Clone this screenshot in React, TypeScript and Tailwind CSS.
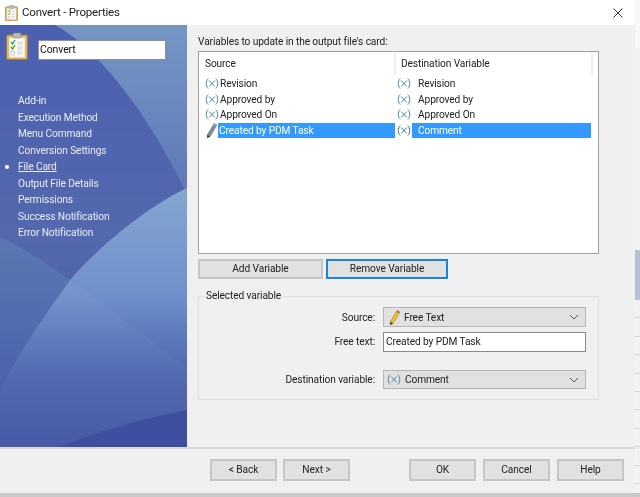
import React from "react";

const font = { fontFamily: '"Roboto", "Liberation Sans", sans-serif' };

function VarIcon({ light = false }: { light?: boolean }) {
  const c = light ? "#2f7aa6" : "#4d87a8";
  return (
    <svg width="14" height="11" viewBox="0 0 14 11" className="shrink-0">
      <path d="M3.200.5C.6 3 .6 8 3.200 10.500" fill="none" stroke={c} strokeWidth="1" />
      <path d="M10.800.5C13.400 3 13.400 8 10.800 10.500" fill="none" stroke={c} strokeWidth="1" />
      <path d="M4.200 2.500 9.800 8.500M9.800 2.500 4.200 8.500" fill="none" stroke={c} strokeWidth="1" />
    </svg>
  );
}

function Pencil({ gray = false }: { gray?: boolean }) {
  return (
    <svg width="12" height="17" viewBox="0 0 12 17" className="shrink-0">
      <path d="M8.200 1.500 10.800 3 4 14.500 1.300 15.800 1.400 12.800Z" fill={gray ? "#7b8f9e" : "#f2c230"} stroke={gray ? "#5b7182" : "#a57f16"} strokeWidth=".7" />
      <path d="M8.200 1.500 10.800 3 10 4.400 7.400 2.900Z" fill={gray ? "#95a5b0" : "#d76a4a"} />
      <path d="M1.400 12.800 4 14.500 1.300 15.800Z" fill="#333" />
    </svg>
  );
}

function Chevron() {
  return (
    <svg width="10" height="6" viewBox="0 0 10 6" className="shrink-0">
      <path d="M1 1 5 5 9 1" fill="none" stroke="#555" strokeWidth="1" />
    </svg>
  );
}

function Clipboard({ small = false }: { small?: boolean }) {
  const s = small ? "w-[13px] h-[16px]" : "w-[22px] h-[28px]";
  return (
    <svg viewBox="0 0 22 28" className={s + " shrink-0"}>
      <rect x=".5" y="3" width="21" height="24.500" rx="1.500" fill="#e0b566" stroke="#a97c2c" />
      <rect x="3" y="5.500" width="16" height="20" fill="#fbfbf6" stroke="#c9c4ae" strokeWidth=".5" />
      <rect x="7" y="1" width="8" height="5" rx="1" fill="#b7bcc0" stroke="#7c8185" strokeWidth=".6" />
      <path d="M5 10 6.500 12 9 8M5 15 6.500 17 9 13" fill="none" stroke="#3aa63a" strokeWidth="1.400" />
      <rect x="5" y="19.500" width="3.500" height="3.500" fill="#fff" stroke="#aaa" strokeWidth=".6" />
      <path d="M11 10h6M11 12h5M11 15h6M11 17h5M11 20h6M11 22h5" stroke="#c4c4c4" strokeWidth=".8" />
    </svg>
  );
}

function Btn({ label, w, focus = false }: { label: string; w: string; focus?: boolean }) {
  return (
    <div
      className={
        "flex items-center justify-center bg-[#e1e1e1] text-[10.2px] tracking-[-0.1px] text-[#222] border-2 " +
        (focus ? "border-[#1b84d8] " : "border-[#c6c6c6] ") +
        w
      }
    >
      {label}
    </div>
  );
}

const rows = [
  ["Revision", "Revision"],
  ["Approved by", "Approved by"],
  ["Approved On", "Approved On"],
];

const nav = [
  "Add-in",
  "Execution Method",
  "Menu Command",
  "Conversion Settings",
  "File Card",
  "Output File Details",
  "Permissions",
  "Success Notification",
  "Error Notification",
];

export default function App() {
  return (
    <div className="relative w-[640px] h-[497px] overflow-hidden bg-[#c9c9c9] flex flex-col blur-[0.35px]" style={font}>
      <div className="flex h-[493px]">
        <div className="w-[635px] h-[493px] flex flex-col bg-[#f0f0f0] shrink-0">
          {/* Title bar */}
          <div className="h-[25px] bg-white flex items-center pl-[5px] pr-[12px] shrink-0">
            <Clipboard small />
            <span className="ml-[4px] text-[11.5px] tracking-[-0.2px] text-[#222]">Convert - Properties</span>
            <svg width="10" height="10" viewBox="0 0 10 10" className="ml-auto">
              <path d="M.5.500l9 9M9.500.500l-9 9" stroke="#333" strokeWidth="1" />
            </svg>
          </div>
          <div className="flex h-[422px] shrink-0">
            {/* Sidebar */}
            <div className="relative w-[187px] shrink-0 bg-[#4f68b2] overflow-hidden text-[10.2px] tracking-[-0.12px] text-[#e9eef8]">
              <svg className="absolute inset-0" width="187" height="422" viewBox="0 0 187 422">
                <defs>
                  <linearGradient id="g" x1="0" y1="0" x2="0" y2="1">
                    <stop offset="0" stopColor="#4b60b0" />
                    <stop offset=".5" stopColor="#5468ae" />
                    <stop offset="1" stopColor="#45589f" />
                  </linearGradient>
                  <linearGradient id="w1" x1="0" y1="0" x2="0" y2="1">
                    <stop offset="0" stopColor="#7596c3" />
                    <stop offset="1" stopColor="#5f78b8" />
                  </linearGradient>
                  <linearGradient id="w2" gradientUnits="userSpaceOnUse" x1="0" y1="165" x2="0" y2="422">
                    <stop offset="0" stopColor="#84a6d0" />
                    <stop offset=".4" stopColor="#7090cb" />
                    <stop offset=".72" stopColor="#4d66b1" />
                    <stop offset="1" stopColor="#4054a3" />
                  </linearGradient>
                  <linearGradient id="l" gradientUnits="userSpaceOnUse" x1="0" y1="212" x2="0" y2="365">
                    <stop offset="0" stopColor="#5a79b2" />
                    <stop offset="1" stopColor="#4a62ae" />
                  </linearGradient>
                </defs>
                <rect width="187" height="422" fill="url(#g)" />
                <path d="M55 0H187V170C165 120 110 30 55 0Z" fill="url(#w1)" />
                <path d="M0 212C25 225 50 240 70 255C45 290 20 325 0 365Z" fill="url(#l)" />
                <path d="M187 163C150 180 100 220 70 255C45 290 20 325 0 365V422H187Z" fill="url(#w2)" />
                <path d="M70 255C110 285 150 315 187 343V422H0V365C20 325 45 290 70 255Z" fill="#ffffff" opacity=".035" />
                <path d="M60 422C100 405 150 392 187 385V422Z" fill="#3e4f9f" />
              </svg>
              <div className="relative flex items-start gap-[10px] pl-[6px] pt-[7px]">
                <Clipboard />
                <div className="mt-[8px] w-[128px] h-[20px] bg-white border border-[#8a8f99] flex items-center pl-[1px] text-[10.5px] text-[#111]">
                  Convert
                </div>
              </div>
              <div className="relative mt-[33px] flex flex-col pl-[18px]">
                {nav.map((n) => (
                  <div key={n} className="relative h-[16.5px] leading-[16.5px] whitespace-nowrap">
                    {n === "File Card" ? (
                      <>
                        <span className="absolute left-[-13px] top-[6px] w-[4px] h-[4px] rounded-full bg-white" />
                        <span className="underline">{n}</span>
                      </>
                    ) : (
                      n
                    )}
                  </div>
                ))}
              </div>
            </div>
            {/* Main */}
            <div className="flex-1 pl-[11px] text-[10.2px] tracking-[-0.12px] text-[#222]">
              <div className="h-[26px] pt-[10px] leading-[14px] whitespace-nowrap">Variables to update in the output file's card:</div>
              <div className="w-[401px] h-[203px] bg-white border border-[#a0a0a0] px-[1px] pt-[1px]">
                <div className="flex h-[22px] items-center">
                  <div className="w-[196px] pl-[5px] h-full flex items-center border-r-2 border-[#f0f0f0]">Source</div>
                  <div className="w-[197px] pl-[5px] h-full flex items-center border-r-2 border-[#f0f0f0]">Destination Variable</div>
                </div>
                <div className="flex flex-col pt-[1px]">
                  {rows.map(([a, b]) => (
                    <div key={a} className="flex h-[15.5px] items-center">
                      <div className="w-[197px] flex items-center pl-[5px]">
                        <VarIcon />
                        <span className="pl-[1px]">{a}</span>
                      </div>
                      <div className="flex items-center">
                        <VarIcon />
                        <span className="pl-[7px]">{b}</span>
                      </div>
                    </div>
                  ))}
                  <div className="flex h-[15.5px] items-center">
                    <div className="w-[197px] flex items-center pl-[6px] h-full">
                      <Pencil gray />
                      <div className="w-[177px] h-full bg-[#3399ff] text-white flex items-center pl-[1px]">Created by PDM Task</div>
                    </div>
                    <div className="flex items-center h-full">
                      <VarIcon light />
                      <div className="w-[179px] ml-[1px] h-full bg-[#3399ff] text-white flex items-center pl-[6px]">Comment</div>
                    </div>
                  </div>
                </div>
              </div>
              <div className="flex gap-[3px] h-[20px] mt-[5px]">
                <Btn label="Add Variable" w="w-[125px]" />
                <Btn label="Remove Variable" w="w-[122px]" focus />
              </div>
              {/* Group */}
              <div className="relative mt-[17px] w-[401px] h-[104px] border border-[#dfdfdf] pr-[12px]">
                <span className="absolute left-[6px] top-[-8px] px-[1px] bg-[#f0f0f0] leading-[14px]">Selected variable</span>
                <div className="mt-[10px] flex flex-col items-end gap-[5px]">
                  <div className="flex items-center h-[20px]">
                    <span className="pr-[8px] pt-[1px]">Source:</span>
                    <div className="w-[203px] h-full bg-[#e1e1e1] border border-[#b5b5b5] flex items-center pl-[5px] pr-[6px]">
                      <Pencil />
                      <span className="ml-[3px] pt-[1px]">Free Text</span>
                      <span className="ml-auto"><Chevron /></span>
                    </div>
                  </div>
                  <div className="flex items-center h-[20px]">
                    <span className="pr-[8px]">Free text:</span>
                    <div className="w-[203px] h-full bg-white border border-[#8a8a8a] flex items-center pl-[2px]">Created by PDM Task</div>
                  </div>
                  <div className="flex items-center h-[19px] mt-[13px]">
                    <span className="pr-[8px] pt-[1px]">Destination variable:</span>
                    <div className="w-[203px] h-full bg-[#e1e1e1] border border-[#b5b5b5] flex items-center pl-[3px] pr-[6px]">
                      <VarIcon />
                      <span className="ml-[4px] pt-[1px]">Comment</span>
                      <span className="ml-auto"><Chevron /></span>
                    </div>
                  </div>
                </div>
              </div>
            </div>
          </div>
          {/* Footer */}
          <div className="flex-1 border-t-2 border-[#d8d8d8] flex pt-[10px] pl-[210px]">
            <div className="flex h-[22px] gap-[6px]">
              <Btn label="< Back" w="w-[67px]" />
              <Btn label="Next >" w="w-[67px]" />
            </div>
            <div className="flex h-[22px] gap-[7px] ml-[59px]">
              <Btn label="OK" w="w-[67px]" />
              <Btn label="Cancel" w="w-[67px]" />
              <Btn label="Help" w="w-[67px]" />
            </div>
          </div>
        </div>
        {/* Behind the window */}
        <div className="flex-1 flex flex-col bg-[#f4f4f4]">
          <div className="h-[48px] bg-[#f8f8f8]" />
          <div className="h-[202px] bg-[#f1f1f1]" />
          <div className="h-[50px] bg-[#b4c2d4]" />
          <div className="flex-1 flex flex-col bg-[#f2f2f2]">
            {[0, 1, 2, 3, 4, 5, 6, 7, 8, 9].map((i) => (
              <div key={i} className="h-[18.4px] border-b border-[#d4d4d4]" />
            ))}
          </div>
        </div>
      </div>
    </div>
  );
}
